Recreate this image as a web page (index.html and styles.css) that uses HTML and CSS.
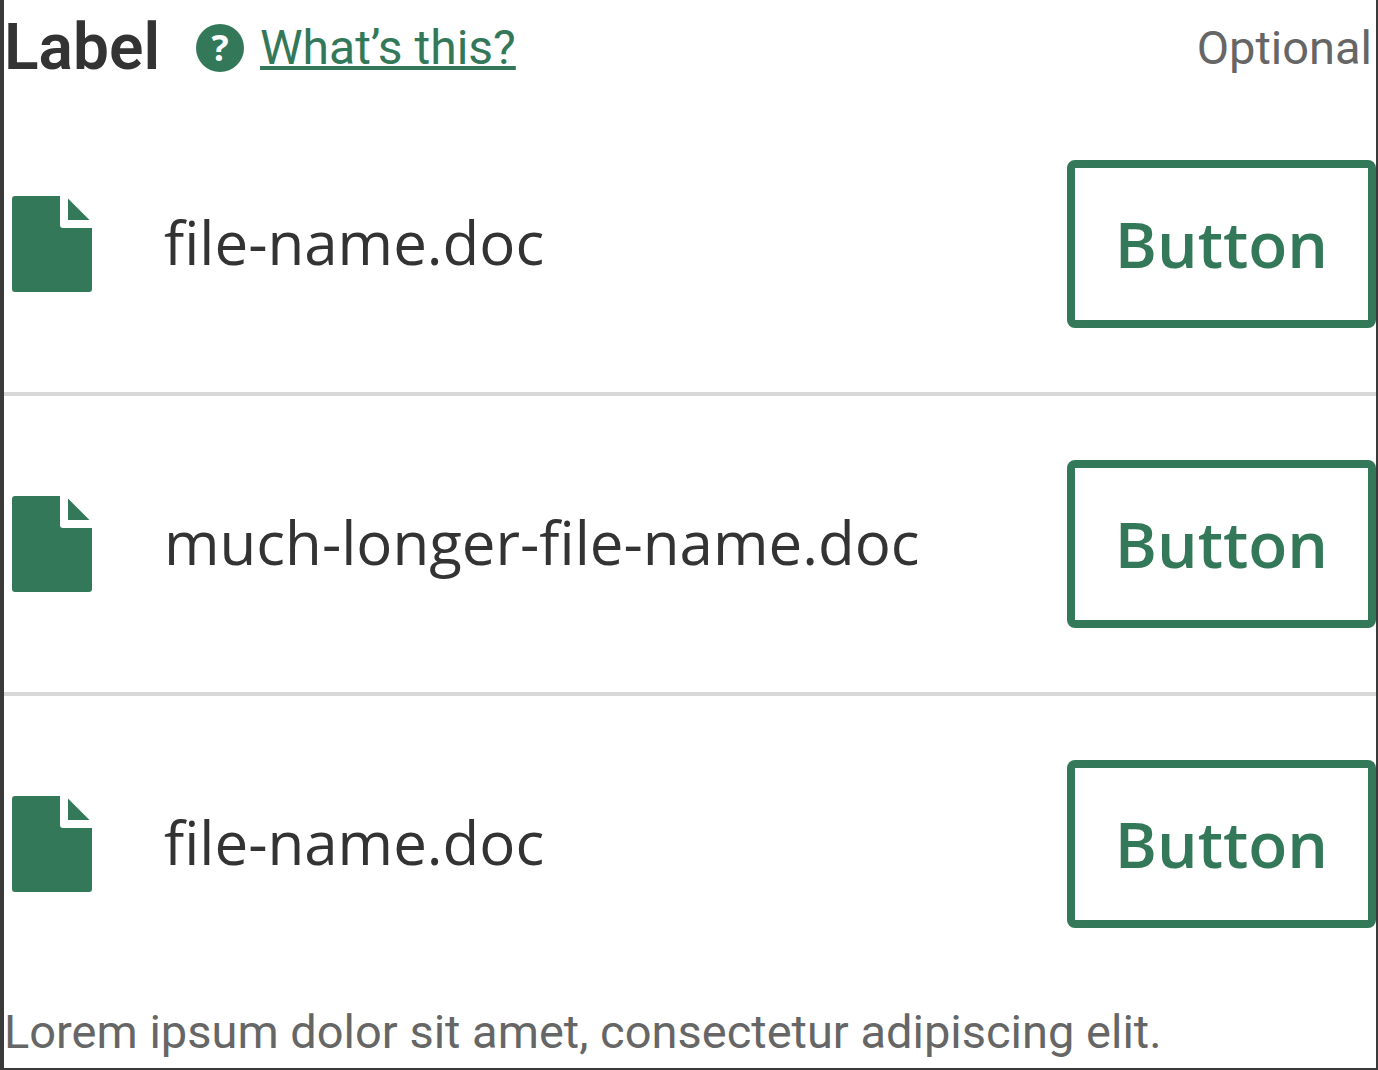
FILE: index.html
```html
<!DOCTYPE html>
<html lang="en">
<head>
  <meta charset="UTF-8">
  <title>File list</title>
  <meta name="viewport" content="width=device-width, initial-scale=1">
  <link rel="stylesheet" href="styles.css">
</head>
<body>

<!-- Shared icon -->
<svg class="sprite" aria-hidden="true">
  <symbol id="icon-file" viewBox="0 0 80 96">
    <path d="M3 0H48V29Q48 32 51 32H80V93Q80 96 77 96H3Q0 96 0 93V3Q0 0 3 0Z"/>
    <path d="M56 2.500L77.500 24H56Z"/>
  </symbol>
</svg>

<main class="field">
  <header class="field-header">
    <h1 class="field-label">Label</h1>
    <a class="help-link" href="#help">
      <span class="help-icon" aria-hidden="true">?</span>
      <span class="help-text">What’s this?</span>
    </a>
    <span class="optional">Optional</span>
  </header>

  <ul class="file-list">
    <li class="file">
      <svg class="file-icon" aria-hidden="true"><use href="#icon-file"/></svg>
      <span class="file-name">file-name.doc</span>
      <button class="file-btn" type="button">Button</button>
    </li>
    <li class="file">
      <svg class="file-icon" aria-hidden="true"><use href="#icon-file"/></svg>
      <span class="file-name">much-longer-file-name.doc</span>
      <button class="file-btn" type="button">Button</button>
    </li>
    <li class="file">
      <svg class="file-icon" aria-hidden="true"><use href="#icon-file"/></svg>
      <span class="file-name">file-name.doc</span>
      <button class="file-btn" type="button">Button</button>
    </li>
  </ul>

  <p class="hint">Lorem ipsum dolor sit amet, consectetur adipiscing elit.</p>
</main>

</body>
</html>
```

FILE: styles.css
```css
* {
  box-sizing: border-box;
}
body {
  font-family: Roboto, "Liberation Sans", sans-serif;
  margin: 0;
  background-color: #fff;
  color: #333;
}
.sprite {
  display: none;
}
.field {
  border: 2px solid #3a3a3a;
  border-top: 0;
  border-left-width: 4px;
}
.field-header {
  display: flex;
  align-items: center;
  height: 96px;
  padding-right: 4px;
}
.field-label {
  margin: 0 36px 0 0;
  font-size: 64px;
  line-height: 96px;
  font-weight: 600;
}
.help-link {
  display: flex;
  align-items: center;
  gap: 16px;
  color: #337859;
  text-decoration: none;
}
.help-icon {
  width: 48px;
  height: 48px;
  border-radius: 50%;
  background-color: #337859;
  color: #fff;
  font-family: "Open Sans", sans-serif;
  font-size: 36px;
  line-height: 48px;
  font-weight: 700;
  text-align: center;
}
.help-text {
  font-size: 48px;
  line-height: 96px;
  text-decoration: underline;
  text-decoration-thickness: 4px;
  text-decoration-skip-ink: none;
  text-underline-offset: 2px;
}
.optional {
  margin-left: auto;
  color: #666;
  font-size: 47px;
  line-height: 96px;
}
.file-list {
  list-style-type: none;
  margin: 0;
  padding: 0;
}
.file {
  display: flex;
  align-items: center;
  padding: 64px 0 64px 8px;
}
.file + .file {
  border-top: 4px solid #d8d8d8;
}
.file-icon {
  flex: none;
  width: 80px;
  height: 96px;
  margin-right: 72px;
  fill: #337859;
}
.file-name {
  flex: 1;
  padding-bottom: 4px;
  font-family: "Open Sans", sans-serif;
  font-size: 60px;
  line-height: 96px;
  font-variant-ligatures: none;
}
.file-btn {
  padding: 32px 40px;
  border: 8px solid #337859;
  border-radius: 8px;
  background-color: #fff;
  color: #337859;
  font-family: "Open Sans", sans-serif;
  font-size: 64px;
  line-height: 88px;
  font-weight: 600;
  cursor: pointer;
}
.hint {
  margin: 0;
  padding-top: 4px;
  color: #666;
  font-size: 47px;
  line-height: 72px;
}
```
